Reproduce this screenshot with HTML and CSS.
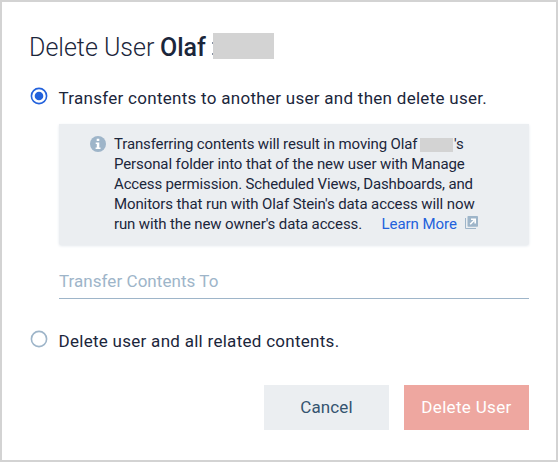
FILE: index.html
```
<!DOCTYPE html>
<html lang="en">
<head>
<meta charset="utf-8">
<title>Delete User</title>
<link rel="stylesheet" href="styles.css">
</head>
<body>
<main class="dialog">
<h1 class="title"><span class="title-action">Delete User</span><strong class="title-name">Olaf</strong><span class="title-dots"></span><span class="title-mask"></span></h1>
<label class="option option-transfer"><svg class="radio" viewBox="0 0 18 18"><circle cx="9" cy="9" r="7.6" fill="#fff" stroke="#2261dc" stroke-width="1.6"/><circle cx="9" cy="9" r="4.3" fill="#2261dc"/></svg><span>Transfer contents to another user and then delete user.</span></label>
<section class="notice">
<svg class="info" viewBox="0 0 16 16"><circle cx="8" cy="8" r="8" fill="#9eb5c9"/><path d="M6.7 2.8h2.6v2.3H6.7zM5.7 6.4h3.6v5h1.2v1.5H5.6v-1.5h1.2V7.9H5.7z" fill="#fff"/></svg>
<div class="copy">
<div class="line"><span class="l1">Transferring contents will result in moving Olaf</span><span class="mask"></span><span>'s</span></div>
<div class="line"><span class="l2">Personal folder into that of the new user with Manage</span></div>
<div class="line"><span class="l3">Access permission. Scheduled Views, Dashboards, and</span></div>
<div class="line"><span class="l4">Monitors that run with Olaf Stein's data access will now</span></div>
<div class="line"><span class="l5">run with the new owner's data access.</span><a class="more">Learn More</a><svg class="external" viewBox="0 0 13 13"><path d="M.5 2v10.5H11" fill="none" stroke="#9eb5c9"/><rect x="2.5" width="10.5" height="10.8" rx=".8" fill="#9eb5c9"/><path d="M5.2 8.2l4-4M6 3.2h4.2v4.2" fill="none" stroke="#fff" stroke-width="1.6"/></svg></div>
</div>
</section>
<div class="field"><span>Transfer Contents To</span></div>
<label class="option option-delete"><svg class="radio" viewBox="0 0 18 18"><circle cx="9" cy="9" r="7.6" fill="#fff" stroke="#9eb5c9" stroke-width="1.6"/></svg><span>Delete user and all related contents.</span></label>
<div class="actions"><button class="button cancel">Cancel</button><button class="button danger">Delete User</button></div>
</main>
</body>
</html>
```
FILE: styles.css
```
* { box-sizing: border-box; }
body { margin: 0; font-family: Roboto, "Liberation Sans", sans-serif; color: #1b263b; background: #fff; }
.dialog { width: 558px; height: 462px; border: 2px solid #d3d3d3; padding: 31px 27px 0; }
.title { display: flex; align-items: flex-start; height: 28px; margin: 0; font-size: 25px; line-height: 29px; font-weight: 300; }
.title-action { width: 131px; }
.title-name { width: 50px; font-weight: 500; }
.title-dots { width: 3px; height: 17px; margin-top: 6px; background: radial-gradient(circle at 2.5px 4px, #8790a0 .6px, transparent 1px), radial-gradient(circle at 2.5px 15px, #8790a0 .6px, transparent 1px); }
.title-mask { width: 61px; height: 26px; background: #d3d3d3; }
.option { display: flex; height: 20px; font-size: 17px; line-height: 20px; letter-spacing: .28px; white-space: nowrap; }
.option-transfer { margin-top: 27px; }
.radio { flex: none; width: 18px; height: 18px; margin: -1px 10.5px 0 1px; }
.notice { display: flex; margin: 16px 0 0 30px; width: 470px; height: 121px; padding: 10px 0 0 31px; background: #ebeef1; border-radius: 0 0 2px 2px; box-shadow: 0 1px 3px #e3e8ed; }
.info { width: 16px; height: 16px; margin: 2px 8px 0 0; }
.line { display: flex; align-items: center; height: 20px; font-size: 15px; white-space: nowrap; }
.l1 { width: 306px; letter-spacing: -.135px; }
.l2 { letter-spacing: -.105px; }
.l3 { letter-spacing: -.155px; }
.l4 { letter-spacing: -.107px; }
.l5 { width: 248px; letter-spacing: -.127px; }
.mask { width: 33px; height: 14px; margin: 2px 1px 0 0; background: #d3d3d3; }
.more { width: 75.5px; color: #2261dc; margin-left: 19.5px; letter-spacing: -.05px; }
.external { width: 13px; height: 13px; margin: -3px 0 0 8px; }
.field { margin: 26px 0 0 30px; width: 470px; height: 28px; border-bottom: 1px solid #9eb5c9; color: #9eb5c9; font-size: 17px; line-height: 20px; letter-spacing: .05px; }
.option-delete { margin-top: 32px; }
.actions { display: flex; justify-content: flex-end; gap: 15px; margin-top: 34px; }
.button { width: 125px; height: 45px; border: 0; padding: 0 0 2px; font: 17px Roboto, sans-serif; }
.cancel { background: #ebeef1; color: #35546f; letter-spacing: .1px; }
.danger { background: #eea7a0; color: #fff; letter-spacing: .33px; }
```
